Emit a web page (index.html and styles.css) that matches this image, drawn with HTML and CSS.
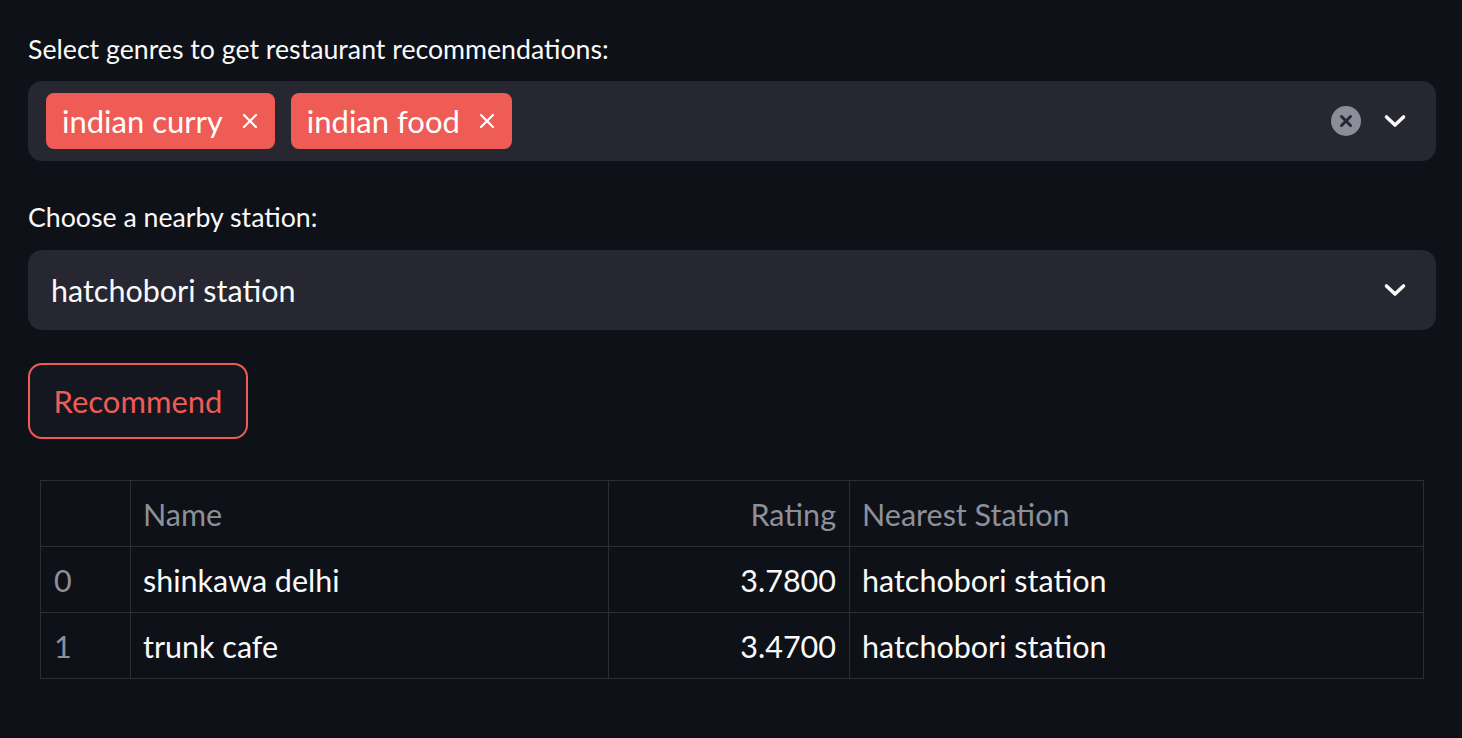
FILE: index.html
```html
<!DOCTYPE html>
<html lang="en">
<head>
<meta charset="utf-8">
<title>Restaurant recommendations</title>
<link rel="stylesheet" href="styles.css">
</head>
<body>
<main class="page">
  <label class="field-label">Select genres to get restaurant recommendations:</label>
  <div class="select-box multi">
    <div class="tags">
      <span class="tag">indian curry
        <svg class="tag-x" viewBox="0 0 16 16" width="16" height="16"><path d="M2 2L14 14M14 2L2 14" stroke="#fff" stroke-width="2.2" stroke-linecap="round"/></svg>
      </span>
      <span class="tag">indian food
        <svg class="tag-x" viewBox="0 0 16 16" width="16" height="16"><path d="M2 2L14 14M14 2L2 14" stroke="#fff" stroke-width="2.2" stroke-linecap="round"/></svg>
      </span>
    </div>
    <div class="controls">
      <svg class="clear" viewBox="0 0 30 30" width="30" height="30"><circle cx="15" cy="15" r="15" fill="#8b8d99"/><path d="M10.5 10.5L19.5 19.5M19.5 10.5L10.5 19.5" stroke="#262730" stroke-width="3" stroke-linecap="round"/></svg>
      <svg class="chev" viewBox="0 0 24 14" width="24" height="14"><path d="M3.5 3L12 11L20.5 3" fill="none" stroke="#fafafa" stroke-width="3.6" stroke-linecap="round" stroke-linejoin="round"/></svg>
    </div>
  </div>

  <label class="field-label second">Choose a nearby station:</label>
  <div class="select-box single">
    <span class="value">hatchobori station</span>
    <div class="controls">
      <svg class="chev" viewBox="0 0 24 14" width="24" height="14"><path d="M3.5 3L12 11L20.5 3" fill="none" stroke="#fafafa" stroke-width="3.6" stroke-linecap="round" stroke-linejoin="round"/></svg>
    </div>
  </div>

  <button class="btn">Recommend</button>

  <table class="grid">
    <colgroup>
      <col class="c-idx"><col class="c-name"><col class="c-rating"><col class="c-station">
    </colgroup>
    <thead>
      <tr><th></th><th>Name</th><th class="num">Rating</th><th>Nearest Station</th></tr>
    </thead>
    <tbody>
      <tr><td class="idx">0</td><td>shinkawa delhi</td><td class="num">3.7800</td><td>hatchobori station</td></tr>
      <tr><td class="idx">1</td><td>trunk cafe</td><td class="num">3.4700</td><td>hatchobori station</td></tr>
    </tbody>
  </table>
</main>
</body>
</html>
```

FILE: styles.css
```css
* { box-sizing: border-box; }
html, body { margin: 0; padding: 0; background: #0e1117; }
body {
  font-family: Lato, "Noto Sans", sans-serif;
  color: #fafafa;
}
.page {
  width: 1408px;
  margin-left: 28px;
  padding-top: 33px;
  display: flex;
  flex-direction: column;
  align-items: flex-start;
}
.field-label {
  display: block;
  font-size: 26.7px;
  line-height: 32px;
  height: 32px;
  margin-bottom: 16px;
  color: #fafafa;
}
.field-label.second {
  margin-top: 40px;
  margin-bottom: 17px;
}
.select-box {
  width: 100%;
  height: 80px;
  background: #262730;
  border-radius: 14px;
  display: flex;
  align-items: center;
  justify-content: space-between;
}
.select-box.multi { padding-left: 18px; padding-right: 29px; }
.select-box.single { padding-left: 23px; padding-right: 29px; }
.tags { display: flex; gap: 16px; }
.tag {
  height: 56px;
  background: #ef5b55;
  border-radius: 8px;
  color: #fff;
  font-size: 31px;
  display: flex;
  align-items: center;
  gap: 19px;
  padding: 0 17px 0 16px;
}
.tag-x { display: block; }
.controls { display: flex; align-items: center; gap: 22px; }
.clear, .chev { display: block; }
.value { font-size: 30.5px; color: #fafafa; }
.btn {
  margin-top: 33px;
  width: 220px;
  height: 76px;
  background: #141720;
  border: 2px solid #ef5b55;
  border-radius: 14px;
  color: #ef5b55;
  font-family: Lato, "Noto Sans", sans-serif;
  font-size: 31px;
  padding: 0;
}
.grid {
  margin-top: 41px;
  margin-left: 12px;
  width: 1383px;
  border-collapse: collapse;
  table-layout: fixed;
  font-size: 30.5px;
}
.c-idx { width: 90px; }
.c-name { width: 478px; }
.c-rating { width: 241px; }
.c-station { width: 574px; }
.grid th, .grid td {
  height: 66px;
  border: 1px solid #2c2e36;
  padding: 0 13px 0 12px;
  text-align: left;
  white-space: nowrap;
}
.grid th { font-weight: 400; color: #8e9098; }
.grid td { color: #fafafa; }
.grid td.idx { color: #8e9098; padding-left: 13px; }
.grid .num { text-align: right; }
```
